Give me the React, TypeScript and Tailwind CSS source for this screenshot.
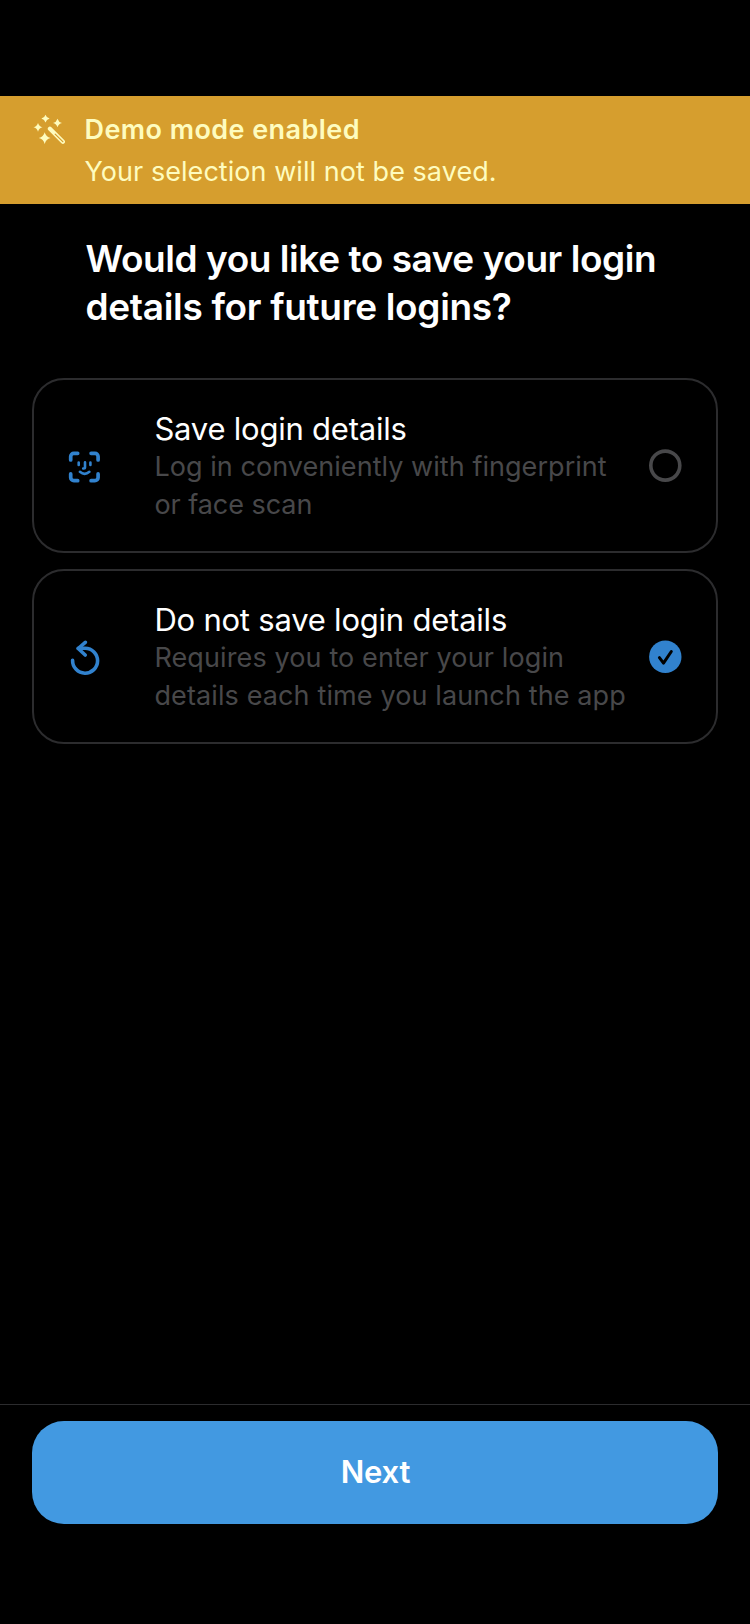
import { type ReactNode } from "react";

function WandIcon() {
  return (
    <svg className="-ml-px h-8 w-8" viewBox="0 0 32 32" fill="#fefcbf">
      <path d="M12.500 0.700Q13.400 3.700 16.600 4.600Q13.400 5.500 12.500 8.500Q11.600 5.500 8.400 4.600Q11.600 3.700 12.500 0.700Z" />
      <path d="M24.500 4.700Q25.500 8.100 29 9Q25.500 9.900 24.500 13.300Q23.500 9.900 20 9Q23.500 8.100 24.500 4.700Z" />
      <path d="M5 8.900Q6 12.400 9.500 13.300Q6 14.200 5 17.700Q4 14.200 0.500 13.300Q4 12.400 5 8.900Z" />
      <path d="M11.700 18.200Q12.900 22.900 17.600 24.100Q12.900 25.300 11.700 30Q10.500 25.300 5.800 24.100Q10.500 22.900 11.700 18.200Z" />
      <path d="M16.900 14.800L29.900 27.700" stroke="#fefcbf" strokeWidth="4.200" strokeLinecap="round" />
      <path d="M22.200 20.100L29.800 27.600" stroke="#d69e2e" strokeWidth="1.300" strokeLinecap="round" />
    </svg>
  );
}

function FaceIcon() {
  return (
    <svg className="mt-[2px] h-8 w-8" viewBox="0 0 32 32" fill="none" stroke="#3182ce" strokeLinecap="round" strokeLinejoin="round">
      <path d="M9.700 2.300H5.900A3.200 3.200 0 0 0 2.700 5.500V8.900M23.100 2.300h3.800A3.200 3.200 0 0 1 30.100 5.500V8.900M2.700 22.900v3.600A3.200 3.200 0 0 0 5.900 29.700H9.700M23.100 29.700h3.800A3.200 3.200 0 0 0 30.100 26.500V22.900" strokeWidth="3.700" />
      <path d="M10.700 11.600v2.400M22.400 11.600v2.400M17 11.400v4.900q0 1.200-1.200 1.200H15.200M11.900 20.800q4.700 4 9.500 0" strokeWidth="2.600" />
    </svg>
  );
}

function ResetIcon() {
  return (
    <svg className="mt-[2px] h-9 w-8" viewBox="0 0 32 36" fill="none" stroke="#3182ce" strokeWidth="3.600" strokeLinecap="round" strokeLinejoin="round">
      <path d="M4.600 20.400A12.500 12.500 0 1 0 17.100 8.200H10.200" />
      <path d="M17.300 2.300L10.200 8.500L17.200 15" />
    </svg>
  );
}

function Radio({ checked }: { checked: boolean }) {
  return (
    <svg className="-ml-px h-[33px] w-[33px]" viewBox="0 0 33 33" fill="none">
      {checked ? (
        <>
          <circle cx="16.300" cy="16.800" r="16.200" fill="#3182ce" />
          <path d="M10.400 17.700L14.500 23.100L22.300 11.500" stroke="#000" strokeWidth="3" strokeLinecap="round" strokeLinejoin="round" />
        </>
      ) : (
        <circle cx="16.300" cy="16.600" r="14.500" stroke="#48484a" strokeWidth="3.600" />
      )}
    </svg>
  );
}

function Option({ icon, checked, title, children }: { icon: ReactNode; checked: boolean; title: string; children: ReactNode }) {
  return (
    <div role="radio" aria-checked={checked} className="flex h-[175px] items-center rounded-[32px] border-2 border-[#2c2c2e] px-[34px]">
      <div className="flex w-[86.400px] shrink-0">{icon}</div>
      <div className="flex-1 pt-[2px] whitespace-nowrap">
        <div className="text-[31px] leading-[38px] tracking-[-0.220px] text-white">{title}</div>
        <div className="text-[27px] leading-[38px] text-[#48484a]">{children}</div>
      </div>
      <Radio checked={checked} />
    </div>
  );
}

export default function App() {
  return (
    <div className="flex h-[1624px] w-[750px] flex-col bg-black font-['Inter',sans-serif]">
      <div className="mt-24 flex h-[108px] shrink-0 bg-[#d69e2e] pt-[13px] pl-[33.500px] text-[27px] leading-[42px] text-[#fefcbf]">
        <div className="w-[51px] pt-[5px]"><WandIcon /></div>
        <div>
          <div className="font-semibold tracking-[0.430px]">Demo mode enabled</div>
          <div className="tracking-[0.050px]">Your selection will not be saved.</div>
        </div>
      </div>
      <h1 className="mt-[31px] pl-[85.500px] text-[37px] leading-[48px] font-semibold text-white">
        <span className="tracking-[-0.440px]">Would you like to save your login</span>
        <br />
        <span className="tracking-[-0.320px]">details for future logins?</span>
      </h1>
      <div className="mt-[47px] flex flex-col gap-4 px-8">
        <Option icon={<FaceIcon />} checked={false} title="Save login details">
          <span className="tracking-[0.050px]">Log in conveniently with fingerprint</span>
          <br />
          <span className="tracking-[-0.050px]">or face scan</span>
        </Option>
        <Option icon={<ResetIcon />} checked title="Do not save login details">
          <span className="tracking-[0.120px]">Requires you to enter your login</span>
          <br />
          <span className="tracking-[0.120px]">details each time you launch the app</span>
        </Option>
      </div>
      <div className="mt-auto h-[220px] shrink-0 border-t border-[#2c2c2e] px-8 pt-4">
        <button className="h-[103px] w-full rounded-[32px] bg-[#4299e1] pl-px text-[31px] font-semibold tracking-[-0.200px] text-white">
          Next
        </button>
      </div>
    </div>
  );
}
